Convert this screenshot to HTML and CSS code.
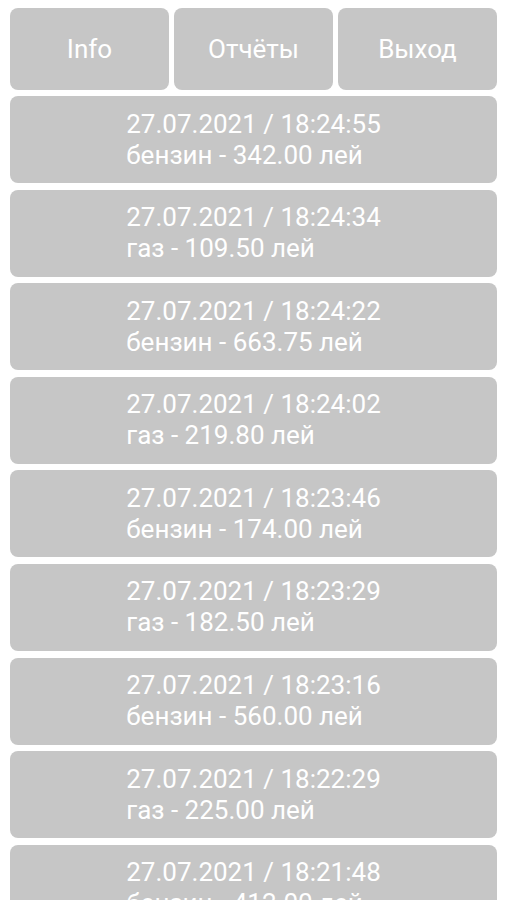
FILE: index.html
```html
<!DOCTYPE html>
<html lang="ru">
<head>
    <meta charset="UTF-8">
    <meta name="viewport" content="width=device-width, initial-scale=1.0">
    <title>Заправки</title>
    <link rel="stylesheet" href="styles.css">
</head>
<body>
    <div class="container">
        <div class="menu">
            <button type="button">Info</button>
            <button type="button">Отчёты</button>
            <button type="button">Выход</button>
        </div>

        <div class="list">
            <div class="item"><div class="item-text">27.07.2021 / 18:24:55<br>бензин - 342.00 лей</div></div>
            <div class="item"><div class="item-text">27.07.2021 / 18:24:34<br>газ - 109.50 лей</div></div>
            <div class="item"><div class="item-text">27.07.2021 / 18:24:22<br>бензин - 663.75 лей</div></div>
            <div class="item"><div class="item-text">27.07.2021 / 18:24:02<br>газ - 219.80 лей</div></div>
            <div class="item"><div class="item-text">27.07.2021 / 18:23:46<br>бензин - 174.00 лей</div></div>
            <div class="item"><div class="item-text">27.07.2021 / 18:23:29<br>газ - 182.50 лей</div></div>
            <div class="item"><div class="item-text">27.07.2021 / 18:23:16<br>бензин - 560.00 лей</div></div>
            <div class="item"><div class="item-text">27.07.2021 / 18:22:29<br>газ - 225.00 лей</div></div>
            <div class="item"><div class="item-text">27.07.2021 / 18:21:48<br>бензин - 412.00 лей</div></div>
        </div>
    </div>
</body>
</html>
```

FILE: styles.css
```css
body {
    font-family: Roboto, "Noto Sans", sans-serif;
    margin: 0;
    background-color: #ffffff;
    height: 900px;
    overflow: hidden;
}
.container {
    padding: 8px 9px 0 10px;
}
.menu {
    display: flex;
    gap: 5px;
    margin-bottom: 6px;
}
.menu button {
    flex: 1;
    height: 82px;
    padding: 0;
    background-color: #c6c6c6;
    color: #ffffff;
    border: none;
    border-radius: 8px;
    font-family: inherit;
    font-size: 26px;
    cursor: pointer;
}
.list {
    display: flex;
    flex-direction: column;
    gap: 6.6px;
}
.item {
    height: 87px;
    background-color: #c6c6c6;
    border-radius: 8px;
    display: flex;
    justify-content: center;
    align-items: center;
    color: #ffffff;
    font-size: 26px;
    line-height: 31px;
}
.item-text {
    text-align: left;
}
```
